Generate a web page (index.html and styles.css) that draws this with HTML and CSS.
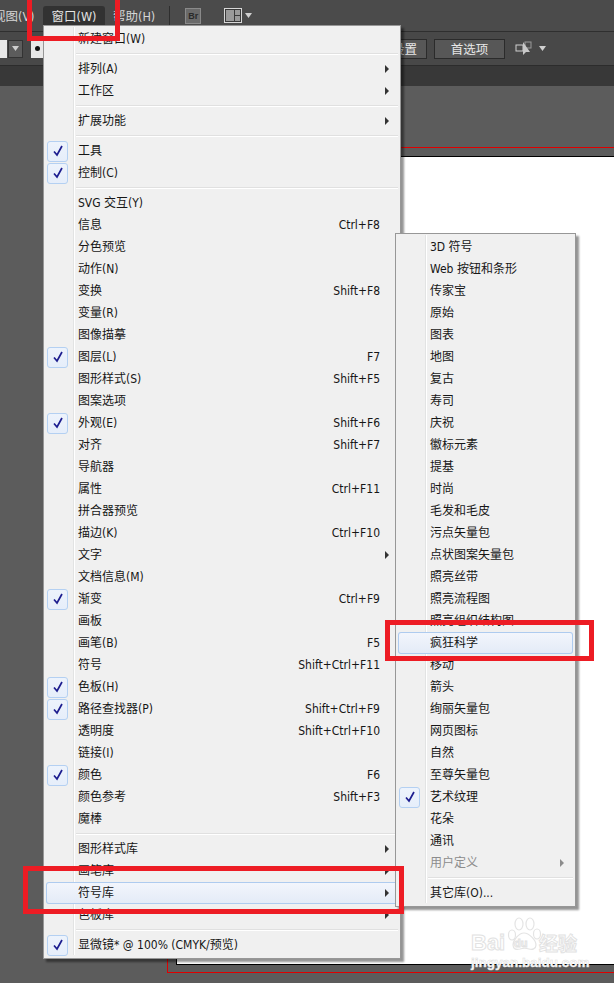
FILE: index.html
```html
<!DOCTYPE html>
<html lang="zh-CN">
<head>
<meta charset="utf-8">
<title>窗口菜单</title>
<link rel="stylesheet" href="styles.css">
</head>
<body>
<div class="app">
  <header class="menubar">
    <span class="menubar-item cut">视图(V)</span>
    <span class="menubar-item active">窗口(W)</span>
    <span class="menubar-item">帮助(H)</span>
    <span class="vrule"></span>
    <span class="br-icon">Br</span>
    <svg class="layout-icon" width="18" height="15" viewBox="0 0 18 15"><rect x="0.5" y="0.5" width="17" height="14" fill="#3a3a3a" stroke="#d8d8d8"/><rect x="2" y="2" width="8" height="11" fill="#9a9a9a"/><rect x="11" y="2" width="5" height="5" fill="#9a9a9a"/><rect x="11" y="8" width="5" height="5" fill="#9a9a9a"/></svg>
    <svg class="drop" width="7" height="5" viewBox="0 0 7 5"><path d="M0 0h7L3.5 5z" fill="#d0d0d0"/></svg>
  </header>
  <div class="controlbar">
    <span class="field-white"></span>
    <span class="field-drop"><svg width="7" height="5" viewBox="0 0 7 5"><path d="M0 0h7L3.5 5z" fill="#cfcfcf"/></svg></span>
    <span class="field-dot"><i></i></span>
    <span class="spacer"></span>
    <button class="ctl-btn btn-cut">文档设置</button>
    <button class="ctl-btn btn-pref">首选项</button>
    <svg class="arrange-icon" width="17" height="15" viewBox="0 0 17 15"><rect x="1" y="4" width="7" height="6" fill="#4a4a4a" stroke="#cfcfcf"/><rect x="10" y="1" width="6" height="6" fill="#4a4a4a" stroke="#9a9a9a"/><path d="M8 1v13l3-3 4 0z" fill="#c8c8c8"/></svg>
    <svg class="drop" width="7" height="5" viewBox="0 0 7 5"><path d="M0 0h7L3.5 5z" fill="#d0d0d0"/></svg>
  </div>
  <div class="tabbar"></div>
  <main class="workspace">
    <div class="bleed"><div class="artboard"></div></div>
  </main>

  <div class="watermark">
    <svg class="paw" width="34" height="34" viewBox="0 0 34 34"><g fill="#fff" stroke="#e4e4e4" stroke-width="1.2"><ellipse cx="5" cy="18" rx="3.5" ry="5"/><ellipse cx="12" cy="7" rx="4" ry="6"/><ellipse cx="23" cy="7" rx="4" ry="6"/><ellipse cx="30" cy="17" rx="3.5" ry="5"/><path d="M17 16c5 0 12 7 12 12 0 4-4 5-7 4-3-1-6-1-9 0-4 1-7 0-7-4 0-5 6-12 11-12z"/></g></svg>
    <div class="wm-logo"><span class="wm-bai">Bai</span><span class="wm-du">du</span><span class="wm-jy">经验</span></div>
    <div class="wm-url">jingyan.baidu.com</div>
  </div>

  <nav class="menu menu-main">
    <div class="row"><span class="gut"></span><span class="lbl">新建窗口(W)</span></div>
    <div class="sep"></div>
    <div class="row"><span class="gut"></span><span class="lbl">排列(A)</span><i class="arrow"></i></div>
    <div class="row"><span class="gut"></span><span class="lbl">工作区</span><i class="arrow"></i></div>
    <div class="sep"></div>
    <div class="row"><span class="gut"></span><span class="lbl">扩展功能</span><i class="arrow"></i></div>
    <div class="sep"></div>
    <div class="row"><span class="gut"><span class="chk"><svg width="12" height="12" viewBox="0 0 12 12"><path d="M2 6.5l3 3.5 5-9" fill="none" stroke="#1d1d8f" stroke-width="1.7"/></svg></span></span><span class="lbl">工具</span></div>
    <div class="row"><span class="gut"><span class="chk"><svg width="12" height="12" viewBox="0 0 12 12"><path d="M2 6.5l3 3.5 5-9" fill="none" stroke="#1d1d8f" stroke-width="1.7"/></svg></span></span><span class="lbl">控制(C)</span></div>
    <div class="sep"></div>
    <div class="row"><span class="gut"></span><span class="lbl">SVG 交互(Y)</span></div>
    <div class="row"><span class="gut"></span><span class="lbl">信息</span><span class="key">Ctrl+F8</span></div>
    <div class="row"><span class="gut"></span><span class="lbl">分色预览</span></div>
    <div class="row"><span class="gut"></span><span class="lbl">动作(N)</span></div>
    <div class="row"><span class="gut"></span><span class="lbl">变换</span><span class="key">Shift+F8</span></div>
    <div class="row"><span class="gut"></span><span class="lbl">变量(R)</span></div>
    <div class="row"><span class="gut"></span><span class="lbl">图像描摹</span></div>
    <div class="row"><span class="gut"><span class="chk"><svg width="12" height="12" viewBox="0 0 12 12"><path d="M2 6.5l3 3.5 5-9" fill="none" stroke="#1d1d8f" stroke-width="1.7"/></svg></span></span><span class="lbl">图层(L)</span><span class="key">F7</span></div>
    <div class="row"><span class="gut"></span><span class="lbl">图形样式(S)</span><span class="key">Shift+F5</span></div>
    <div class="row"><span class="gut"></span><span class="lbl">图案选项</span></div>
    <div class="row"><span class="gut"><span class="chk"><svg width="12" height="12" viewBox="0 0 12 12"><path d="M2 6.5l3 3.5 5-9" fill="none" stroke="#1d1d8f" stroke-width="1.7"/></svg></span></span><span class="lbl">外观(E)</span><span class="key">Shift+F6</span></div>
    <div class="row"><span class="gut"></span><span class="lbl">对齐</span><span class="key">Shift+F7</span></div>
    <div class="row"><span class="gut"></span><span class="lbl">导航器</span></div>
    <div class="row"><span class="gut"></span><span class="lbl">属性</span><span class="key">Ctrl+F11</span></div>
    <div class="row"><span class="gut"></span><span class="lbl">拼合器预览</span></div>
    <div class="row"><span class="gut"></span><span class="lbl">描边(K)</span><span class="key">Ctrl+F10</span></div>
    <div class="row"><span class="gut"></span><span class="lbl">文字</span><i class="arrow"></i></div>
    <div class="row"><span class="gut"></span><span class="lbl">文档信息(M)</span></div>
    <div class="row"><span class="gut"><span class="chk"><svg width="12" height="12" viewBox="0 0 12 12"><path d="M2 6.5l3 3.5 5-9" fill="none" stroke="#1d1d8f" stroke-width="1.7"/></svg></span></span><span class="lbl">渐变</span><span class="key">Ctrl+F9</span></div>
    <div class="row"><span class="gut"></span><span class="lbl">画板</span></div>
    <div class="row"><span class="gut"></span><span class="lbl">画笔(B)</span><span class="key">F5</span></div>
    <div class="row"><span class="gut"></span><span class="lbl">符号</span><span class="key">Shift+Ctrl+F11</span></div>
    <div class="row"><span class="gut"><span class="chk"><svg width="12" height="12" viewBox="0 0 12 12"><path d="M2 6.5l3 3.5 5-9" fill="none" stroke="#1d1d8f" stroke-width="1.7"/></svg></span></span><span class="lbl">色板(H)</span></div>
    <div class="row"><span class="gut"><span class="chk"><svg width="12" height="12" viewBox="0 0 12 12"><path d="M2 6.5l3 3.5 5-9" fill="none" stroke="#1d1d8f" stroke-width="1.7"/></svg></span></span><span class="lbl">路径查找器(P)</span><span class="key">Shift+Ctrl+F9</span></div>
    <div class="row"><span class="gut"></span><span class="lbl">透明度</span><span class="key">Shift+Ctrl+F10</span></div>
    <div class="row"><span class="gut"></span><span class="lbl">链接(I)</span></div>
    <div class="row"><span class="gut"><span class="chk"><svg width="12" height="12" viewBox="0 0 12 12"><path d="M2 6.5l3 3.5 5-9" fill="none" stroke="#1d1d8f" stroke-width="1.7"/></svg></span></span><span class="lbl">颜色</span><span class="key">F6</span></div>
    <div class="row"><span class="gut"></span><span class="lbl">颜色参考</span><span class="key">Shift+F3</span></div>
    <div class="row"><span class="gut"></span><span class="lbl">魔棒</span></div>
    <div class="sep"></div>
    <div class="row"><span class="gut"></span><span class="lbl">图形样式库</span><i class="arrow"></i></div>
    <div class="row"><span class="gut"></span><span class="lbl">画笔库</span><i class="arrow"></i></div>
    <div class="row hl"><span class="gut"></span><span class="lbl">符号库</span><i class="arrow"></i></div>
    <div class="row"><span class="gut"></span><span class="lbl">色板库</span><i class="arrow"></i></div>
    <div class="sep"></div>
    <div class="row"><span class="gut"><span class="chk"><svg width="12" height="12" viewBox="0 0 12 12"><path d="M2 6.5l3 3.5 5-9" fill="none" stroke="#1d1d8f" stroke-width="1.7"/></svg></span></span><span class="lbl">显微镜* @ 100% (CMYK/预览)</span></div>
  </nav>

  <nav class="menu menu-sub">
    <div class="row"><span class="gut"></span><span class="lbl">3D 符号</span></div>
    <div class="row"><span class="gut"></span><span class="lbl">Web 按钮和条形</span></div>
    <div class="row"><span class="gut"></span><span class="lbl">传家宝</span></div>
    <div class="row"><span class="gut"></span><span class="lbl">原始</span></div>
    <div class="row"><span class="gut"></span><span class="lbl">图表</span></div>
    <div class="row"><span class="gut"></span><span class="lbl">地图</span></div>
    <div class="row"><span class="gut"></span><span class="lbl">复古</span></div>
    <div class="row"><span class="gut"></span><span class="lbl">寿司</span></div>
    <div class="row"><span class="gut"></span><span class="lbl">庆祝</span></div>
    <div class="row"><span class="gut"></span><span class="lbl">徽标元素</span></div>
    <div class="row"><span class="gut"></span><span class="lbl">提基</span></div>
    <div class="row"><span class="gut"></span><span class="lbl">时尚</span></div>
    <div class="row"><span class="gut"></span><span class="lbl">毛发和毛皮</span></div>
    <div class="row"><span class="gut"></span><span class="lbl">污点矢量包</span></div>
    <div class="row"><span class="gut"></span><span class="lbl">点状图案矢量包</span></div>
    <div class="row"><span class="gut"></span><span class="lbl">照亮丝带</span></div>
    <div class="row"><span class="gut"></span><span class="lbl">照亮流程图</span></div>
    <div class="row"><span class="gut"></span><span class="lbl">照亮组织结构图</span></div>
    <div class="row hl"><span class="gut"></span><span class="lbl">疯狂科学</span></div>
    <div class="row"><span class="gut"></span><span class="lbl">移动</span></div>
    <div class="row"><span class="gut"></span><span class="lbl">箭头</span></div>
    <div class="row"><span class="gut"></span><span class="lbl">绚丽矢量包</span></div>
    <div class="row"><span class="gut"></span><span class="lbl">网页图标</span></div>
    <div class="row"><span class="gut"></span><span class="lbl">自然</span></div>
    <div class="row"><span class="gut"></span><span class="lbl">至尊矢量包</span></div>
    <div class="row"><span class="gut"><span class="chk"><svg width="12" height="12" viewBox="0 0 12 12"><path d="M2 6.5l3 3.5 5-9" fill="none" stroke="#1d1d8f" stroke-width="1.7"/></svg></span></span><span class="lbl">艺术纹理</span></div>
    <div class="row"><span class="gut"></span><span class="lbl">花朵</span></div>
    <div class="row"><span class="gut"></span><span class="lbl">通讯</span></div>
    <div class="row off"><span class="gut"></span><span class="lbl">用户定义</span><i class="arrow"></i></div>
    <div class="sep"></div>
    <div class="row"><span class="gut"></span><span class="lbl">其它库(O)...</span></div>
  </nav>

  <div class="mark mark-window"></div>
  <div class="mark mark-symbol"></div>
  <div class="mark mark-science"></div>
</div>
</body>
</html>
```
FILE: styles.css
```css
* { box-sizing: border-box; }
html, body { margin: 0; padding: 0; }
body {
  font-family: "DejaVu Sans Condensed", "DejaVu Sans", "Noto Sans CJK SC", sans-serif;
  font-stretch: condensed;
  font-size: 12px;
  color: #161616;
}
.app {
  position: relative;
  width: 614px;
  height: 983px;
  overflow: hidden;
  display: flex;
  flex-direction: column;
  background: #5c5c5c;
}

/* application chrome */
.menubar {
  height: 32px;
  flex: none;
  display: flex;
  align-items: center;
  background: #4b4b4b;
  border-bottom: 1px solid #2f2f2f;
  color: #d6d6d6;
  font-size: 12.5px;
}
.menubar-item { line-height: 21px; height: 19px; padding: 0 8px; white-space: nowrap; }
.menubar-item.cut { margin-left: -15px; width: 58px; padding: 0 0 0 8px; flex: none; }
.menubar-item.active {
  width: 62px;
  text-align: center;
  padding: 0;
  background: #323232;
  border-radius: 3px 3px 0 0;
  color: #e4e4e4;
}
.vrule { width: 1px; height: 20px; background: #2e2e2e; margin: 0 15px 0 6px; }
.br-icon {
  width: 16px;
  height: 16px;
  background: #6a6a6a;
  border: 1px solid #8a8a8a;
  color: #2a2a2a;
  font: bold 9px/14px "Liberation Sans", sans-serif;
  text-align: center;
}
.layout-icon { margin-left: 23px; }
.drop { margin-left: 3px; }
.controlbar {
  height: 34px;
  flex: none;
  display: flex;
  align-items: center;
  background: #484848;
  border-bottom: 1px solid #2c2c2c;
  color: #e6e6e6;
}
.field-white { width: 7px; height: 18px; background: #e8e8e8; }
.field-drop {
  width: 15px;
  height: 18px;
  margin-left: 1px;
  background: #5c5c5c;
  border: 1px solid #333;
  display: flex;
  align-items: center;
  justify-content: center;
}
.field-dot {
  width: 14px;
  height: 18px;
  margin-left: 8px;
  background: #e8e8e8;
  display: flex;
  align-items: center;
  justify-content: center;
}
.field-dot i { width: 5px; height: 5px; border-radius: 50%; background: #111; margin-right: 2px; }
.spacer { flex: 1; }
.ctl-btn {
  height: 20px;
  padding: 0;
  background: #575757;
  border: 1px solid #2b2b2b;
  color: #e6e6e6;
  font: 12.5px/18px "Noto Sans CJK SC", sans-serif;
  white-space: nowrap;
}
.btn-cut { width: 70px; margin-right: 7px; text-align: right; padding-right: 9px; }
.btn-pref { width: 71px; margin-right: 10px; }
.controlbar .drop { margin-left: 7px; margin-right: 68px; }
.tabbar { height: 20px; flex: none; background: #383838; }
.workspace { flex: 1; padding: 61px 0 0 167px; }

/* artboard with bleed */
.bleed {
  height: 826px;
  border-top: 1px solid #e00000;
  border-left: 1px solid #e00000;
  border-bottom: 1px solid #e00000;
  padding: 8px 0 7px 8px;
}
.artboard {
  height: 100%;
  background: #fff;
  border-top: 1px solid #000;
  border-left: 1px solid #000;
  border-bottom: 1px solid #000;
}

/* menus */
.menu {
  position: absolute;
  background: #f0f0f0;
  border: 1px solid #979797;
  box-shadow: 3px 3px 2px rgba(0, 0, 0, 0.42);
  padding: 2px 2px 2px;
}
.menu::before {
  content: "";
  position: absolute;
  top: 1px;
  bottom: 3px;
  width: 2px;
  background: linear-gradient(90deg, #e2e3e3 50%, #fff 50%);
}
.menu-main { left: 43px; top: 25px; width: 358px; }
.menu-main::before { left: 29px; }
.menu-sub { left: 395px; top: 233px; width: 181px; }
.menu-sub::before { left: 29px; }
.row {
  position: relative;
  height: 22px;
  display: flex;
  align-items: center;
  line-height: 22px;
  white-space: nowrap;
}
.gut { width: 32px; flex: none; display: flex; align-items: center; padding-left: 1px; }
.chk {
  width: 21px;
  height: 21px;
  background: linear-gradient(#edf3fc, #e6eefa);
  border: 1px solid #b4d0f2;
  border-radius: 3px;
  display: flex;
  align-items: center;
  justify-content: center;
}
.lbl { flex: 1; }
.key { margin-right: 18px; }
.arrow {
  position: absolute;
  right: 9px;
  top: 7px;
  width: 0;
  height: 0;
  border-left: 4px solid #333;
  border-top: 4px solid transparent;
  border-bottom: 4px solid transparent;
}
.hl {
  background: linear-gradient(#f3f6fc, #e3ebf7);
  box-shadow: inset 0 0 0 1px #aecbef;
  border-radius: 3px;
}
.off { color: #8c8c8c; }
.off .arrow { border-left-color: #8c8c8c; }
.sep {
  height: 8px;
  margin-left: 30px;
  padding-top: 3px;
}
.sep::before {
  content: "";
  display: block;
  height: 2px;
  background: linear-gradient(#e0e0e0 50%, #fff 50%);
}

/* red annotation frames */
.mark { position: absolute; border: 5px solid #ed1c24; }
.mark-window { left: 27px; top: -6px; width: 93px; height: 47px; }
.mark-symbol { left: 23px; top: 866px; width: 381px; height: 48px; }
.mark-science { left: 385px; top: 620px; width: 209px; height: 41px; }

/* watermark */
.watermark {
  position: absolute;
  left: 470px;
  top: 916px;
  width: 110px;
  height: 58px;
  color: #fff;
  font-family: "Liberation Sans", sans-serif;
  font-stretch: normal;
}
.paw { position: absolute; left: 37px; top: 1px; }
.wm-logo { position: absolute; left: 1px; top: 17px; height: 20px; display: flex; align-items: center; -webkit-text-stroke: 1px #e2e2e2; }
.wm-bai { font-size: 22px; font-weight: 700; line-height: 20px; width: 43px; }
.wm-du { font-size: 11px; font-weight: 700; line-height: 12px; width: 25px; }
.wm-jy { font-family: "Noto Sans CJK SC", sans-serif; font-size: 19px; line-height: 20px; font-weight: 700; }
.wm-url { position: absolute; left: 1px; top: 41px; font-size: 13.5px; font-weight: 700; line-height: 12px; -webkit-text-stroke: 0.5px #dcdcdc; white-space: nowrap; }
```
